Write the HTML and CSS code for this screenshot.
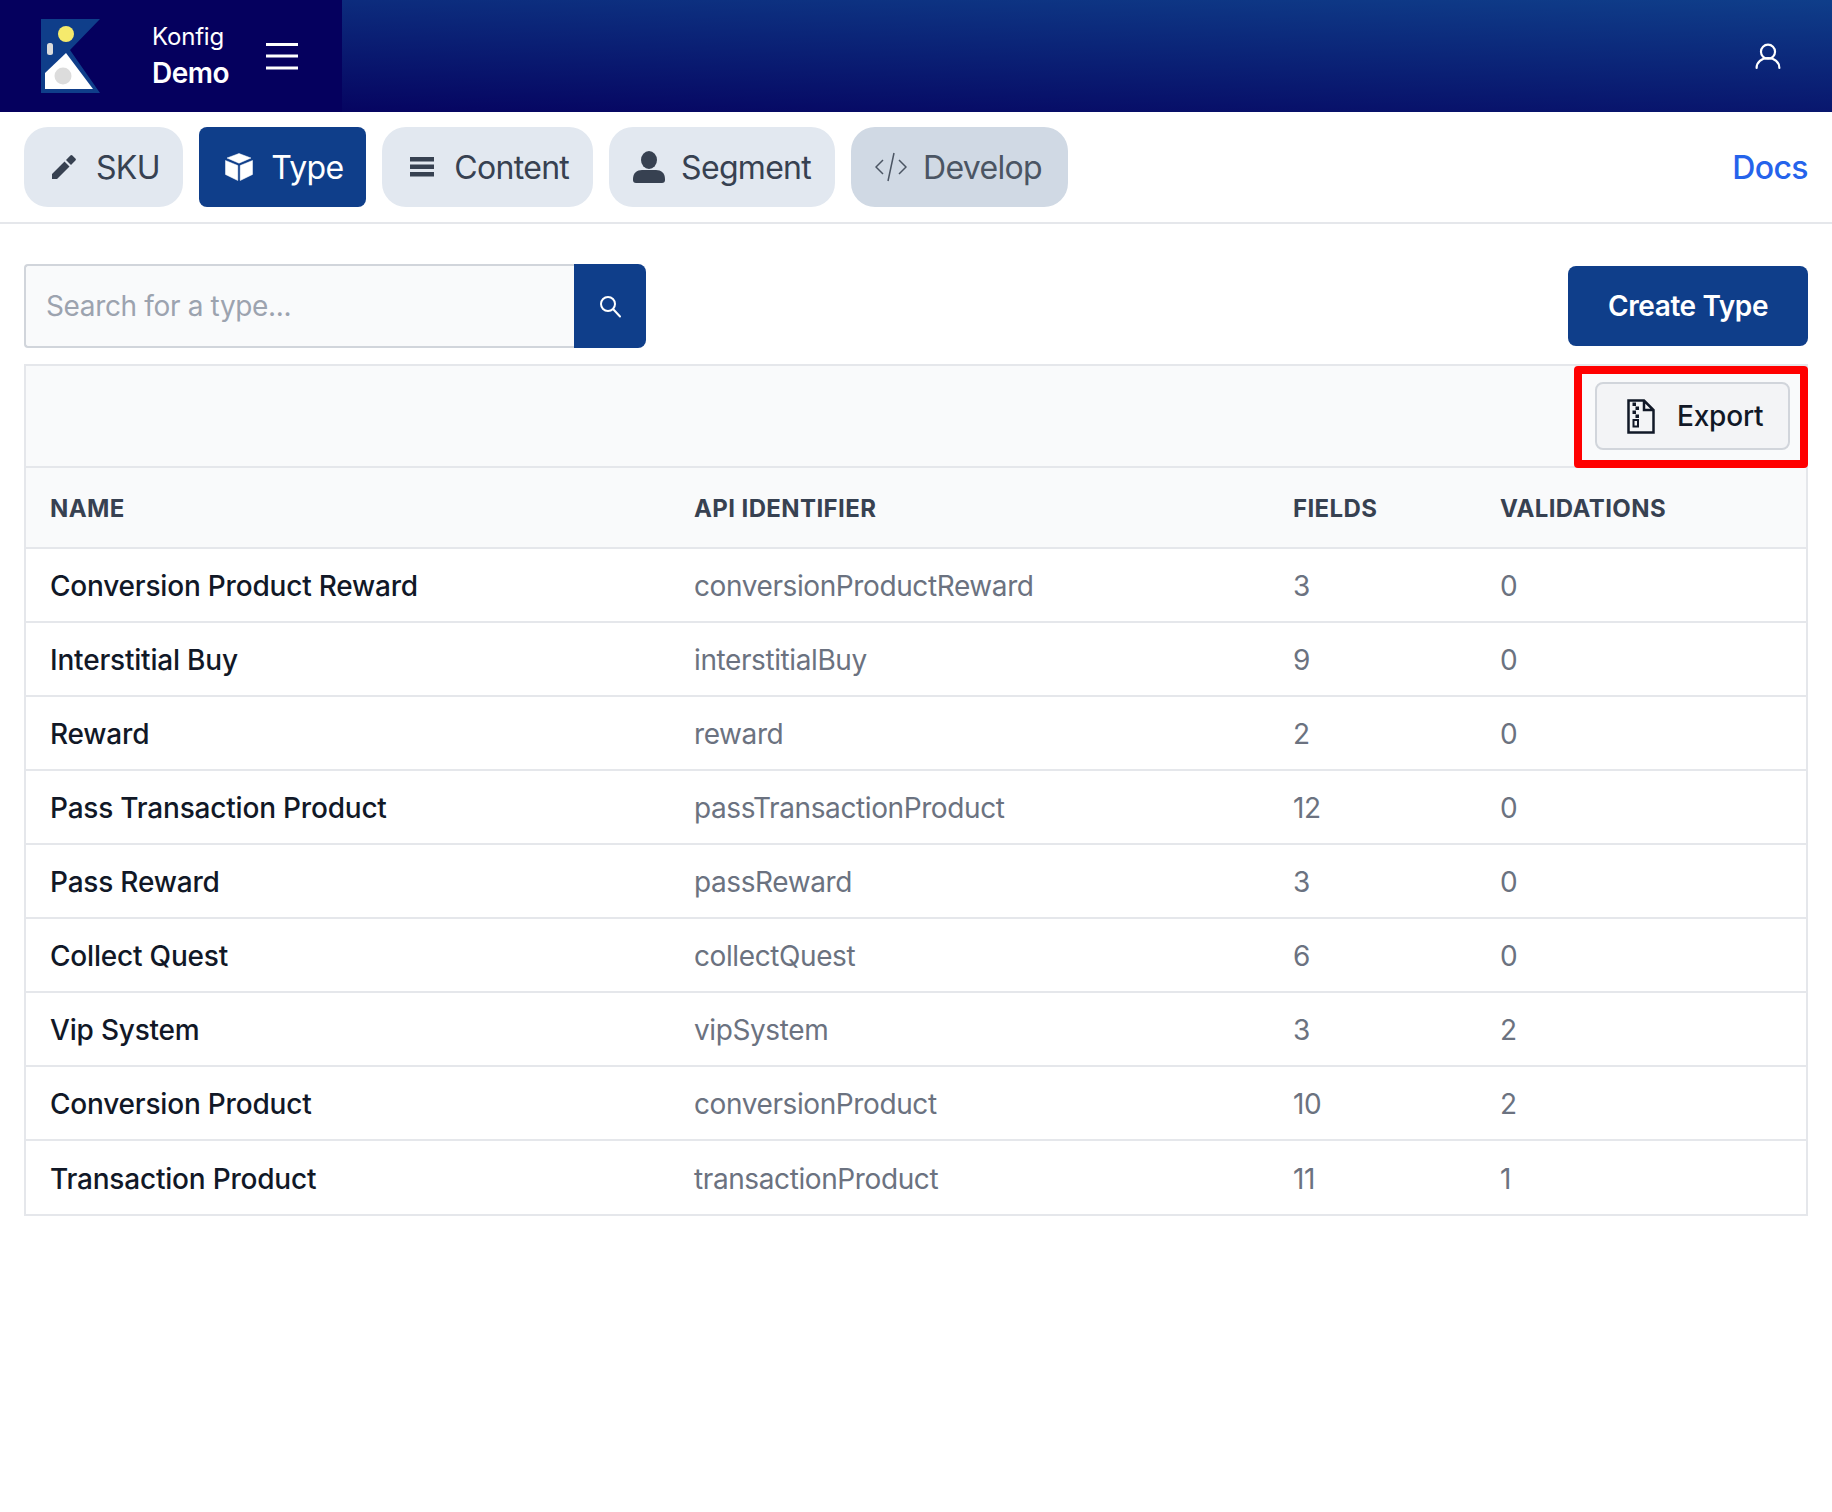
FILE: index.html
```html
<!DOCTYPE html>
<html lang="en">
<head>
    <meta charset="UTF-8">
    <meta name="viewport" content="width=device-width, initial-scale=1.0">
    <title>Konfig - Types</title>
    <link rel="stylesheet" href="styles.css">
</head>
<body>

<header class="topbar">
    <div class="brand">
        <svg class="logo" viewBox="0 0 60 74" width="60" height="74">
            <polygon points="0,0 59,0 29,31 59,74 0,74" fill="#0f3e8a"/>
            <circle cx="25" cy="15" r="8" fill="#f5ea6c"/>
            <rect x="6" y="24" width="6" height="12" rx="2.500" fill="#dcdcdc"/>
            <polygon points="25,34 52,70 4,70 4,54" fill="#fff"/>
            <circle cx="22" cy="57" r="8.500" fill="#dcdcdc"/>
        </svg>
        <div class="brand-text">
            <span class="brand-org">Konfig</span>
            <span class="brand-project">Demo</span>
        </div>
        <svg class="burger" viewBox="0 0 32 28" width="32" height="28">
            <path d="M0 2.500h32M0 14h32M0 26h32" stroke="#fff" stroke-width="3"/>
        </svg>
    </div>
    <svg class="user-icon" viewBox="0 0 24 24" width="26" height="26" fill="none" stroke="#fff" stroke-width="2" stroke-linecap="round">
        <circle cx="12" cy="8" r="6.500"/>
        <path d="M1.500 23c0-5.500 4.500-9 10.500-9s10.500 3.500 10.500 9"/>
    </svg>
</header>

<nav class="tabs">
    <a class="tab tab-sku">
        <svg viewBox="0 0 24 24" width="24" height="24" fill="currentColor"><path d="M0 19v5h5L17.500 11.500l-5-5zM23.400 5.600a1.400 1.400 0 0 0 0-2L20.400.6a1.400 1.400 0 0 0-2 0L14 5l5 5z"/></svg>
        <span>SKU</span>
    </a>
    <a class="tab tab-active">
        <svg viewBox="0 0 28 28" width="28" height="28" fill="currentColor" stroke="currentColor" stroke-width="0.500" stroke-linejoin="round"><path d="M14 .5 2 5l12 5.200L26 5zM.5 7.500v14L12.800 27.500V12.500zM27.500 7.500 15.200 12.500v15l12.300-6z"/></svg>
        <span>Type</span>
    </a>
    <a class="tab">
        <svg viewBox="0 0 24 20" width="24" height="20" fill="currentColor"><path d="M0 0h24v4.500H0zM0 7.500h24V12H0zM0 15h24v4.500H0z"/></svg>
        <span>Content</span>
    </a>
    <a class="tab">
        <svg viewBox="0 0 32 32" width="32" height="32" fill="currentColor"><ellipse cx="16" cy="9" rx="8" ry="9"/><path d="M0 28c0-6 4-9 9-9h14c5 0 9 3 9 9v1c0 2-1 3-3 3H3c-2 0-3-1-3-3z"/></svg>
        <span>Segment</span>
    </a>
    <a class="tab tab-dev">
        <svg viewBox="0 0 32 30" width="32" height="30" fill="none" stroke="currentColor" stroke-width="1.500"><path d="M8 8 1 15l7 7M24 8l7 7-7 7M19 1l-6 28"/></svg>
        <span>Develop</span>
    </a>
    <a class="docs-link">Docs</a>
</nav>

<main class="content">
    <div class="actions">
        <div class="search">
            <input type="text" placeholder="Search for a type...">
            <button class="search-btn">
                <svg viewBox="0 0 24 24" width="24" height="24" fill="none" stroke="#fff" stroke-width="2" stroke-linecap="round"><circle cx="10" cy="10" r="7"/><path d="m15.500 15.500 6.500 7"/></svg>
            </button>
        </div>
        <button class="create-btn">Create Type</button>
    </div>

    <section class="card">
        <div class="toolbar">
            <button class="export-btn">
                <svg viewBox="0 0 28 35" width="28" height="35" fill="none" stroke="#111827" stroke-width="2.500">
                    <path d="M1.500 1.500H17L26.500 11V33.500H1.500zM17 1.500V11H26.500"/>
                    <path d="M5.500 3.500h3.500v3.500H5.500zM8.500 7.500H12V11H8.500zM5.500 11.500h3.500V15H5.500zM8.500 15.500H12V19H8.500z" fill="#111827" stroke="none"/>
                    <rect x="6.500" y="21" width="4.500" height="6.500" stroke-width="2"/>
                </svg>
                Export
            </button>
            <div class="highlight"></div>
        </div>
        <table>
            <thead>
                <tr>
                    <th class="col-name">Name</th>
                    <th class="col-api">API Identifier</th>
                    <th class="col-fields">Fields</th>
                    <th>Validations</th>
                </tr>
            </thead>
            <tbody>
                <tr><td class="name">Conversion Product Reward</td><td>conversionProductReward</td><td>3</td><td>0</td></tr>
                <tr><td class="name">Interstitial Buy</td><td>interstitialBuy</td><td>9</td><td>0</td></tr>
                <tr><td class="name">Reward</td><td>reward</td><td>2</td><td>0</td></tr>
                <tr><td class="name">Pass Transaction Product</td><td>passTransactionProduct</td><td>12</td><td>0</td></tr>
                <tr><td class="name">Pass Reward</td><td>passReward</td><td>3</td><td>0</td></tr>
                <tr><td class="name">Collect Quest</td><td>collectQuest</td><td>6</td><td>0</td></tr>
                <tr><td class="name">Vip System</td><td>vipSystem</td><td>3</td><td>2</td></tr>
                <tr><td class="name">Conversion Product</td><td>conversionProduct</td><td>10</td><td>2</td></tr>
                <tr><td class="name">Transaction Product</td><td>transactionProduct</td><td>11</td><td>1</td></tr>
            </tbody>
        </table>
    </section>
</main>

</body>
</html>
```

FILE: styles.css
```css
* {
    box-sizing: border-box;
}
body {
    margin: 0;
    font-family: Inter, "Liberation Sans", sans-serif;
    background: #fff;
    color: #111827;
}
button {
    font-family: inherit;
    cursor: pointer;
}

/* top bar */
.topbar {
    height: 112px;
    display: flex;
    justify-content: space-between;
    align-items: center;
    padding-right: 51px;
    background: linear-gradient(2deg, #05005e, #0f3e8a);
}
.brand {
    width: 342px;
    height: 100%;
    display: flex;
    align-items: center;
    padding-left: 41px;
    background: #05005e;
    color: #fff;
}
.logo {
    flex-shrink: 0;
}
.brand-text {
    display: flex;
    flex-direction: column;
    margin-left: 51px;
    width: 114px;
    margin-top: -2px;
}
.brand-org {
    font-size: 24px;
    line-height: 36px;
    letter-spacing: -0.2px;
}
.brand-project {
    font-size: 28px;
    line-height: 36px;
    font-weight: 600;
    letter-spacing: -0.5px;
}

/* tabs */
.tabs {
    height: 112px;
    display: flex;
    align-items: center;
    gap: 16px;
    padding: 0 24px;
    border-bottom: 2px solid #e5e7eb;
}
.tab {
    height: 80px;
    display: flex;
    align-items: center;
    gap: 16px;
    padding: 0 24px;
    border-radius: 24px;
    background: #e2e8f0;
    color: #374151;
    font-size: 32px;
    letter-spacing: -0.7px;
}
.tab svg {
    width: 32px;
}
.tab span {
    margin-top: 1px;
}
.tab-sku {
    padding-right: 23.500px;
}
.tab-active {
    background: #0f3e8a;
    color: #fff;
    border-radius: 8px;
    padding-right: 23px;
}
.tab-dev {
    background: #d0d9e4;
    color: #4b5563;
    padding-right: 26px;
}
.docs-link {
    margin-left: auto;
    margin-top: 1px;
    font-size: 32px;
    font-weight: 500;
    letter-spacing: -0.6px;
    color: #2563eb;
}

/* search row */
.content {
    padding: 40px 24px 0;
}
.actions {
    display: flex;
    justify-content: space-between;
    align-items: center;
}
.search {
    display: flex;
    height: 84px;
}
.search input {
    width: 550px;
    height: 100%;
    padding: 0 20px;
    border: 2px solid #d1d5db;
    border-right: 0;
    border-radius: 4px 0 0 4px;
    background: #f9fafb;
    font-family: inherit;
    font-size: 28px;
    letter-spacing: -0.35px;
    color: #111827;
    outline: none;
}
.search input::placeholder {
    color: #9ca3af;
}
.search-btn {
    width: 72px;
    height: 100%;
    display: flex;
    justify-content: center;
    align-items: center;
    border: 0;
    border-radius: 0 8px 8px 0;
    background: #0f3e8a;
}
.create-btn {
    width: 240px;
    height: 80px;
    border: 0;
    border-radius: 8px;
    background: #0f3e8a;
    color: #fff;
    font-size: 28px;
    font-weight: 600;
    letter-spacing: -0.4px;
}

/* table card */
.card {
    margin-top: 16px;
    border: 2px solid #e5e7eb;
    background: #fff;
}
.toolbar {
    position: relative;
    height: 102px;
    display: flex;
    justify-content: flex-end;
    padding: 16px 16px 0 0;
    background: #f9fafb;
    border-bottom: 2px solid #e5e7eb;
}
.export-btn {
    width: 195px;
    height: 68px;
    display: flex;
    align-items: center;
    gap: 22px;
    padding: 0 0 0 30px;
    border: 2px solid #d1d5db;
    border-radius: 8px;
    background: #f3f4f6;
    color: #111827;
    font-size: 28px;
    font-weight: 500;
    letter-spacing: -0.2px;
}
.highlight {
    position: absolute;
    top: 0;
    right: -2px;
    bottom: -2px;
    width: 234px;
    border: 8px solid #ff0000;
    border-radius: 4px;
}
table {
    width: 100%;
    border-collapse: collapse;
    table-layout: fixed;
}
th {
    height: 80px;
    padding: 2px 24px 0;
    background: #f9fafb;
    border-bottom: 2px solid #e5e7eb;
    text-align: left;
    text-transform: uppercase;
    font-size: 24px;
    font-weight: 700;
    letter-spacing: 0.4px;
    color: #374151;
}
.col-name {
    width: 644px;
}
.col-api {
    width: 599px;
}
.col-fields {
    width: 207px;
}
td {
    height: 74px;
    padding: 2px 24px 0;
    border-bottom: 2px solid #e5e7eb;
    font-size: 28px;
    letter-spacing: -0.4px;
    color: #6b7280;
}
td.name {
    font-weight: 500;
    letter-spacing: -0.2px;
    color: #111827;
}
tbody tr:last-child td {
    border-bottom: 0;
}
```
